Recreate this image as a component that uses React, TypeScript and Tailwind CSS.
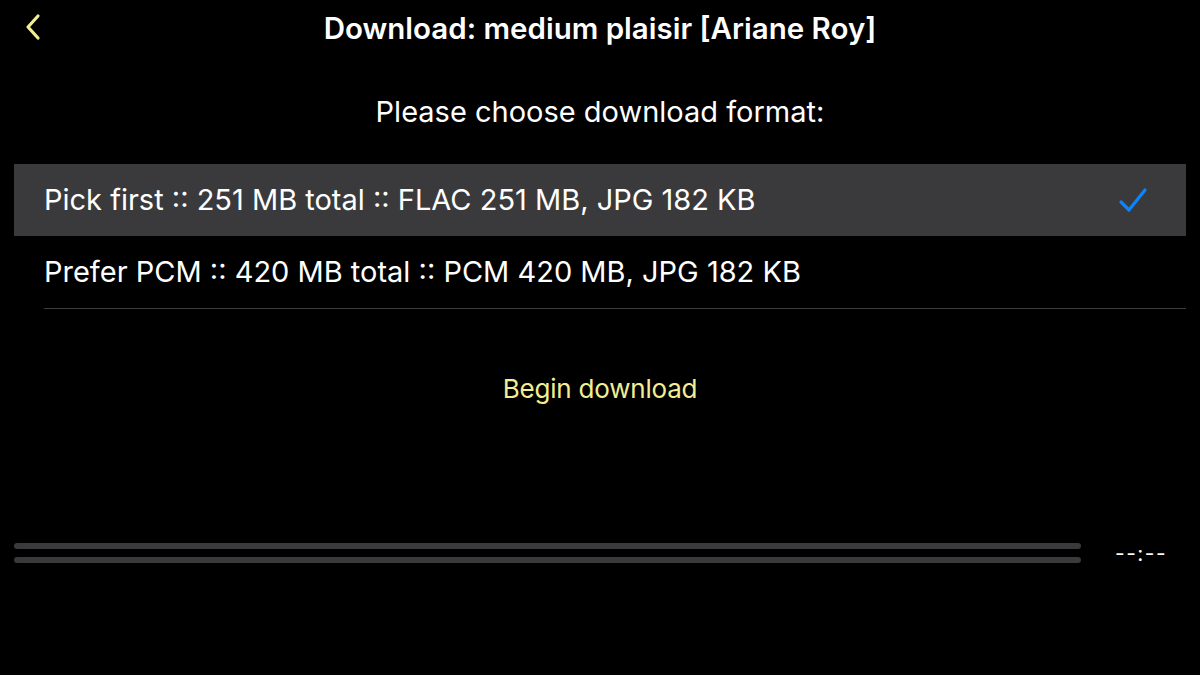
import { useState } from 'react';

const FORMATS = [
  { id: 'first', label: 'Pick first :: 251 MB total :: FLAC 251 MB, JPG 182 KB' },
  { id: 'pcm', label: 'Prefer PCM :: 420 MB total :: PCM 420 MB, JPG 182 KB' }
];

export default function App() {
  const [selected, setSelected] = useState('first');

  return (
    <div
      className="w-[1200px] h-[675px] bg-black text-white overflow-hidden flex flex-col"
      style={{ fontFamily: 'Inter, "Noto Sans", sans-serif' }}
    >
      {/* Cabecera */}
      <div className="relative h-[56px] flex items-center justify-center">
        <button className="absolute left-[20px] top-[12px] w-[26px] h-[30px] flex items-center justify-center">
          <svg width="16" height="28" viewBox="0 0 16 28" fill="none">
            <path d="M13 3L3 14L13 25" stroke="#f3ee92" strokeWidth="3.2" strokeLinecap="round" strokeLinejoin="round" />
          </svg>
        </button>
        <h1 className="text-[29.5px] font-semibold">Download: medium plaisir [Ariane Roy]</h1>
      </div>

      <p className="mt-[34px] text-center text-[29px]">Please choose download format:</p>

      {/* Lista de formatos */}
      <div className="mt-[30px] ml-[14px] w-[1172px]">
        {FORMATS.map((f) => (
          <div
            key={f.id}
            onClick={() => setSelected(f.id)}
            className={`h-[72px] flex items-center pl-[30px] pr-[38px] cursor-pointer ${selected === f.id ? 'bg-[#3a3a3c]' : ''}`}
          >
            <span className="flex-1 text-[29px]">{f.label}</span>
            {selected === f.id && (
              <svg width="30" height="26" viewBox="0 0 30 26" fill="none">
                <path d="M3 15L11 23L27 3" stroke="#0a84ff" strokeWidth="3.2" strokeLinecap="round" strokeLinejoin="round" />
              </svg>
            )}
          </div>
        ))}
        <div className="ml-[30px] h-px bg-[#3d3d3f]" />
      </div>

      <button className="mt-[60px] self-center text-[26px] text-[#f3ee92] tracking-[-0.2px]">Begin download</button>

      {/* Progreso */}
      <div className="mt-[130px] flex items-center pl-[14px]">
        <div className="w-[1067px] flex flex-col gap-[8px]">
          <div className="h-[6px] rounded-full bg-[#3a3a3c]" />
          <div className="h-[6px] rounded-full bg-[#3a3a3c]" />
        </div>
        <span className="ml-[34px] text-[21px] tracking-[1.5px]">--:--</span>
      </div>
    </div>
  );
}
